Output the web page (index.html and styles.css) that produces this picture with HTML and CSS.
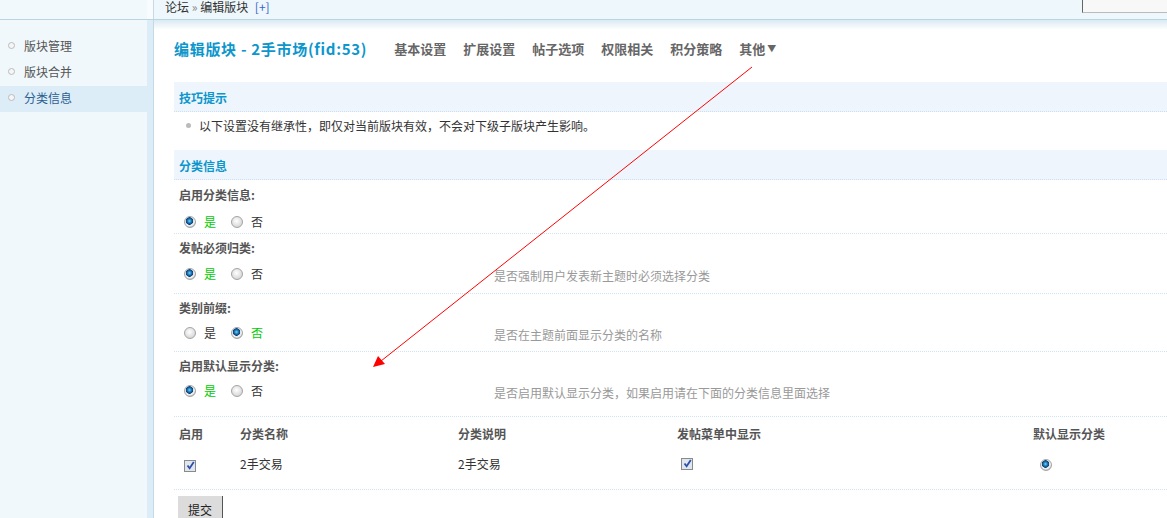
FILE: index.html
```html
<!DOCTYPE html>
<html lang="zh-CN">
<head>
    <meta charset="UTF-8">
    <title>编辑版块 - 2手市场</title>
    <link rel="stylesheet" href="styles.css">
</head>
<body>
    <div class="topbar">
        <div class="topbar-side"></div>
        <div class="crumb">论坛 <span class="raquo">»</span> 编辑版块 <a class="plus" href="#">[+]</a></div>
        <div class="search-box"></div>
    </div>

    <div class="layout">
        <ul class="sidebar">
            <li>版块管理</li>
            <li>版块合并</li>
            <li class="active">分类信息</li>
        </ul>

        <div class="main">
            <div class="title-row">
                <h1>编辑版块 - 2手市场(fid:53)</h1>
                <nav class="tabs">
                    <a href="#">基本设置</a>
                    <a href="#">扩展设置</a>
                    <a href="#">帖子选项</a>
                    <a href="#">权限相关</a>
                    <a href="#">积分策略</a>
                    <a href="#">其他<span class="caret">▼</span></a>
                </nav>
            </div>

            <div class="panel">
                <div class="panel-head">技巧提示</div>
                <ul class="tips">
                    <li>以下设置没有继承性，即仅对当前版块有效，不会对下级子版块产生影响。</li>
                </ul>

                <div class="panel-head">分类信息</div>

                <div class="row row-short">
                    <div class="label">启用分类信息:</div>
                    <div class="line">
                        <div class="radios">
                            <label class="opt on"><span class="radio checked"></span>是</label>
                            <label class="opt"><span class="radio"></span>否</label>
                        </div>
                    </div>
                </div>

                <div class="row row-plus">
                    <div class="label">发帖必须归类:</div>
                    <div class="line">
                        <div class="radios">
                            <label class="opt on"><span class="radio checked"></span>是</label>
                            <label class="opt"><span class="radio"></span>否</label>
                        </div>
                        <div class="desc">是否强制用户发表新主题时必须选择分类</div>
                    </div>
                </div>

                <div class="row">
                    <div class="label">类别前缀:</div>
                    <div class="line">
                        <div class="radios">
                            <label class="opt"><span class="radio"></span>是</label>
                            <label class="opt on"><span class="radio checked"></span>否</label>
                        </div>
                        <div class="desc">是否在主题前面显示分类的名称</div>
                    </div>
                </div>

                <div class="row row-tall">
                    <div class="label">启用默认显示分类:</div>
                    <div class="line">
                        <div class="radios">
                            <label class="opt on"><span class="radio checked"></span>是</label>
                            <label class="opt"><span class="radio"></span>否</label>
                        </div>
                        <div class="desc">是否启用默认显示分类，如果启用请在下面的分类信息里面选择</div>
                    </div>
                </div>

                <div class="grid grid-head">
                    <div>启用</div>
                    <div>分类名称</div>
                    <div>分类说明</div>
                    <div>发帖菜单中显示</div>
                    <div>默认显示分类</div>
                </div>
                <div class="grid grid-row">
                    <div><span class="check"><svg width="9" height="9" viewBox="0 0 9 9"><path d="M1.5 4.5 L3.6 7.2 L7.8 1" fill="none" stroke="#2b4ea8" stroke-width="1.8"/></svg></span></div>
                    <div>2手交易</div>
                    <div>2手交易</div>
                    <div><span class="check check-up"><svg width="9" height="9" viewBox="0 0 9 9"><path d="M1.5 4.5 L3.6 7.2 L7.8 1" fill="none" stroke="#2b4ea8" stroke-width="1.8"/></svg></span></div>
                    <div class="cell-radio"><span class="radio checked small"></span></div>
                </div>

                <div class="actions">
                    <button type="button" class="btn">提交</button>
                </div>
            </div>
        </div>
    </div>

    <svg class="annotation" width="1167" height="518" viewBox="0 0 1167 518">
        <line x1="752" y1="67" x2="381" y2="361" stroke="#f00" stroke-width="1"/>
        <polygon points="373,367 378,356 385,364" fill="#f00"/>
    </svg>
</body>
</html>
```

FILE: styles.css
```css
body {
    margin: 0;
    font-family: "Noto Sans CJK SC", "Liberation Sans", sans-serif;
    font-size: 12px;
    color: #333;
    background: #fff;
    overflow: hidden;
}
a {
    text-decoration: none;
}
ul {
    list-style: none;
    margin: 0;
    padding: 0;
}

/* top bar */
.topbar {
    display: flex;
    height: 19px;
    background: #eef7fb;
    border-bottom: 1px solid #b9d4e2;
}
.topbar-side {
    width: 147px;
    background: #f2f9fd;
    border-right: 6px solid #f8fcfe;
}
.crumb {
    border-left: 1px solid #c8dae5;
    padding-left: 11px;
    line-height: 13px;
    color: #333;
}
.raquo {
    color: #888;
}
.plus {
    color: #3366cc;
    margin-left: 4px;
}
.search-box {
    margin-left: auto;
    width: 84px;
    height: 12px;
    background: #f8f8f8;
    border-left: 1px solid #666;
    border-bottom: 1px solid #bbb;
}

/* layout */
.layout {
    display: flex;
    height: 498px;
}
.sidebar {
    width: 147px;
    background: #f0f8fc;
    border-right: 6px solid #dcedf7;
    padding-top: 14px;
}
.sidebar li {
    position: relative;
    height: 26px;
    line-height: 24px;
    padding-left: 24px;
    color: #555;
}
.sidebar li::before {
    content: "";
    position: absolute;
    left: 8px;
    top: 8px;
    width: 5px;
    height: 5px;
    border: 1px solid #bbb;
    border-radius: 50%;
    background: #f6f6f6;
}
.sidebar li.active {
    background: #dcedf8;
    color: #2c5f91;
}

.main {
    flex: 1;
    border-left: 1px solid #c3d9e6;
    background: linear-gradient(#dbeaf2, #ffffff 10px);
    padding: 18px 0 0 20px;
}

/* title row */
.title-row {
    display: flex;
    align-items: center;
    height: 20px;
}
.title-row h1 {
    margin: 0;
    font-size: 15px;
    font-weight: bold;
    color: #0c96cc;
    letter-spacing: 0.7px;
}
.tabs {
    display: flex;
    gap: 17px;
    margin-left: 27px;
}
.tabs a {
    font-size: 13px;
    font-weight: bold;
    color: #666;
}
.caret {
    font-size: 9px;
    margin-left: 2px;
    vertical-align: 2px;
}

/* panel */
.panel {
    margin-top: 24px;
}
.panel-head {
    height: 29px;
    line-height: 31px;
    padding-left: 5px;
    background: #eef5fc;
    border-bottom: 1px dotted #c9e0f4;
    color: #0c96cc;
    font-weight: bold;
}
.tips {
    padding: 4px 0 14px 25px;
}
.tips li {
    position: relative;
    line-height: 20px;
}
.tips li::before {
    content: "";
    position: absolute;
    left: -13px;
    top: 7px;
    width: 5px;
    height: 5px;
    border-radius: 50%;
    background: #bbb;
}

.row {
    padding: 4px 0 6px 5px;
    border-bottom: 1px dotted #cfe3f4;
}
.row-short {
    padding-top: 5px;
    padding-bottom: 1px;
}
.row-plus {
    padding-bottom: 7px;
}
.row-tall {
    padding-bottom: 13px;
}
.label {
    line-height: 20px;
    font-weight: bold;
    color: #555;
}
.line {
    display: flex;
    margin-top: 3px;
}
.row-short .line {
    margin-top: 7px;
}
.row-plus .line {
    margin-top: 4px;
}
.radios {
    width: 315px;
    display: flex;
    line-height: 20px;
}
.opt {
    display: flex;
    align-items: center;
    margin-left: 5px;
    margin-right: 10px;
    color: #333;
}
.opt.on {
    color: #00cc00;
}
.radio {
    display: inline-block;
    box-sizing: border-box;
    width: 12px;
    height: 12px;
    margin-right: 8px;
    border: 1px solid #a4a4a4;
    border-radius: 50%;
    background: radial-gradient(circle at 45% 40%, #ffffff, #d9d9d9 70%, #c4c4c4);
}
.radio.checked {
    background: radial-gradient(circle at 45% 40%, #7fd0f5 0, #1a78b8 2px, #0b3f73 3.5px, #dfe3e7 4px, #f4f4f4 5px, #bdbdbd 6px);
}
.radio.small {
    margin-right: 0;
}
.desc {
    padding-top: 4px;
    line-height: 20px;
    color: #999;
}

/* category table */
.grid {
    display: grid;
    grid-template-columns: 61px 218px 219px 356px auto;
    padding-left: 5px;
}
.grid-head {
    padding-top: 7px;
    padding-bottom: 6px;
    line-height: 20px;
    font-weight: bold;
    color: #555;
}
.grid-row {
    padding-top: 4px;
    padding-bottom: 13px;
    line-height: 20px;
    border-bottom: 1px dotted #cfe3f4;
}
.check {
    display: inline-flex;
    align-items: center;
    justify-content: center;
    box-sizing: border-box;
    width: 12px;
    height: 12px;
    margin-left: 5px;
    border: 1px solid #8a8a8a;
    background: #dfe6ee;
    vertical-align: -1px;
}
.check-up {
    margin-left: 4px;
    vertical-align: 1px;
}
.cell-radio {
    padding-left: 7px;
    padding-top: 2px;
}

.actions {
    padding: 6px 0 0 4px;
}
.btn {
    font-family: inherit;
    font-size: 12px;
    color: #222;
    height: 26px;
    padding: 0 10px;
    background: #dcdcdc;
    border: none;
    border-right: 1px solid #555;
}

/* red annotation arrow */
.annotation {
    position: absolute;
    left: 0;
    top: 0;
    pointer-events: none;
}
```
